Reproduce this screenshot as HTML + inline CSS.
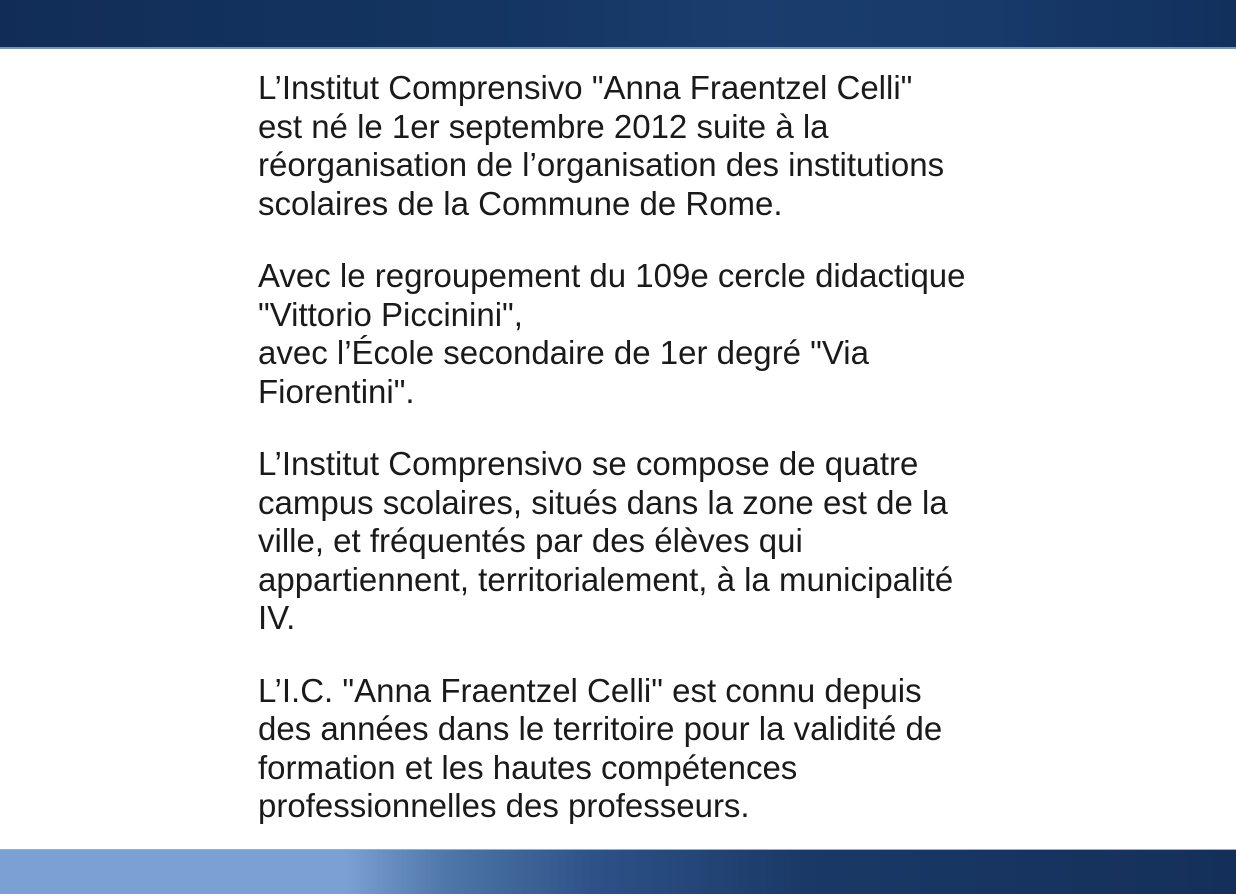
<!DOCTYPE html>
<html><head><meta charset="utf-8"><style>
html,body{margin:0;padding:0;width:1236px;height:893px;overflow:hidden;background:#fff;}
.top{position:absolute;left:0;top:0;width:1236px;height:47px;background:linear-gradient(90deg,#112d57 0%,#143562 40%,#1a3d6e 60%,#173a6a 80%,#12305c 100%);border-bottom:2px solid #7a93b8;}
.bot{position:absolute;left:0;top:849px;width:1236px;height:44px;background:linear-gradient(90deg,#7ba0d3 0%,#7ba0d3 28%,#4f77a8 36%,#2d5288 48%,#1a3966 65%,#14305a 100%);border-top:1px solid #aab;}
.txt{position:absolute;left:258px;top:69px;width:900px;font-family:"Liberation Sans",Arial,sans-serif;font-size:33px;line-height:38.5px;color:#1a1a1a;}
.txt p{margin:0 0 34px 0;white-space:nowrap;}
</style></head><body>
<div class="top"></div>
<div class="txt">
<p>L’Institut Comprensivo "Anna Fraentzel Celli"<br>est né le 1er septembre 2012 suite à la<br>réorganisation de l’organisation des institutions<br>scolaires de la Commune de Rome.</p>
<p>Avec le regroupement du 109e cercle didactique<br>"Vittorio Piccinini",<br>avec l’École secondaire de 1er degré "Via<br>Fiorentini".</p>
<p>L’Institut Comprensivo se compose de quatre<br>campus scolaires, situés dans la zone est de la<br>ville, et fréquentés par des élèves qui<br>appartiennent, territorialement, à la municipalité<br>IV.</p>
<p>L’I.C. "Anna Fraentzel Celli" est connu depuis<br>des années dans le territoire pour la validité de<br>formation et les hautes compétences<br>professionnelles des professeurs.</p>
</div>
<div class="bot"></div>
</body></html>
